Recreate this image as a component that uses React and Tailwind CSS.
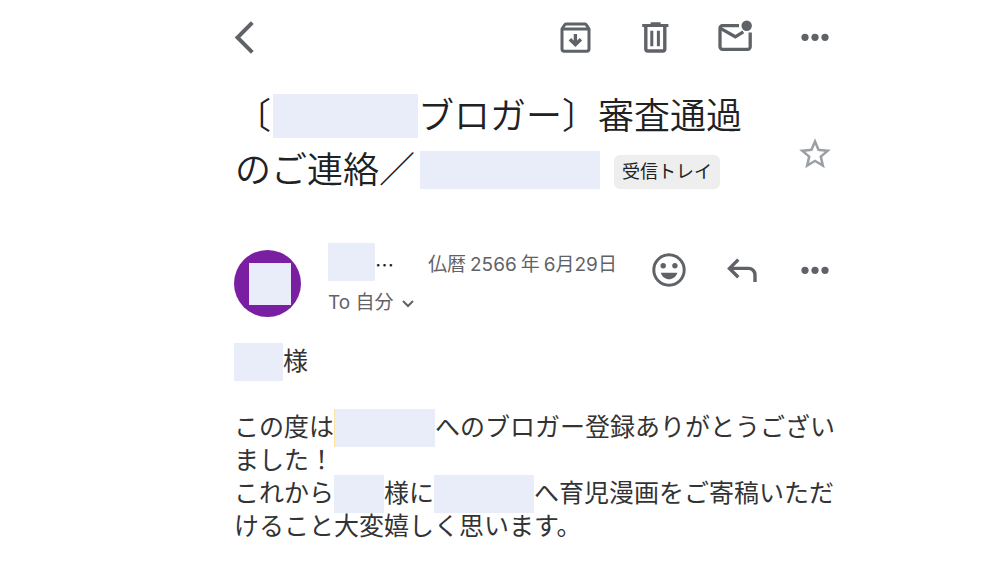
/**
 * App.jsx
 * Mail detail view: toolbar, subject, sender row and message body.
 */

import { MdStarBorder } from 'react-icons/md';

function Icon({ children, strokeWidth = 3, className = 'w-10' }) {
  return (
    <svg
      className={`h-10 shrink-0 ${className}`}
      fill="none"
      stroke="currentColor"
      strokeWidth={strokeWidth}
      aria-hidden="true"
    >
      {children}
    </svg>
  );
}

function BackIcon() {
  return (
    <Icon strokeWidth={4} className="w-5">
      <path d="M18.3 5.7 3.5 20.5l14.8 14.8" />
    </Icon>
  );
}

function ArchiveIcon() {
  return (
    <Icon>
      <path d="M7 12v20a2.2 2.2 0 0 0 2.2 2.2h22.6A2.2 2.2 0 0 0 34 32V12l-2.7-4.2a2 2 0 0 0-1.6-.8H11.3a2 2 0 0 0-1.6.8z" />
      <path d="M7 12h27" />
      <path d="M20.4 17v10M14.9 22.2l5.5 5.5 5.5-5.5" strokeWidth="3.4" />
    </Icon>
  );
}

function TrashIcon() {
  return (
    <Icon>
      <path d="M7.2 8.6h26.2M15.6 6.8h10" />
      <path d="M10.8 9v23a2 2 0 0 0 2 2h15a2 2 0 0 0 2-2V9" strokeWidth="3.4" />
      <path d="M16.8 13.7v15.6M23.4 13.7v15.6" />
    </Icon>
  );
}

function UnreadIcon() {
  return (
    <Icon strokeWidth={3.3}>
      <path d="M24 8.7H7.5A2.5 2.5 0 0 0 5 11.2v18.6a2.5 2.5 0 0 0 2.5 2.5h25.2a2.5 2.5 0 0 0 2.5-2.5V15.6" />
      <path d="m5.5 11.4 14.8 8.4 8-5" />
      <circle cx="31.7" cy="8.7" r="5.2" fill="currentColor" stroke="none" />
    </Icon>
  );
}

function MoreIcon() {
  return (
    <Icon>
      <g fill="currentColor" stroke="none">
        <circle cx="10" cy="20.3" r="3.6" />
        <circle cx="20" cy="20.3" r="3.6" />
        <circle cx="30" cy="20.3" r="3.6" />
      </g>
    </Icon>
  );
}

function SmileIcon() {
  return (
    <Icon>
      <circle cx="20" cy="20" r="15.2" />
      <g fill="currentColor" stroke="none">
        <circle cx="14.2" cy="15.7" r="2.7" />
        <circle cx="25.9" cy="15.7" r="2.7" />
        <path d="M11.7 22.8h16.7c-1.3 4.2-4.7 6.5-8.3 6.5s-7-2.3-8.4-6.5z" />
      </g>
    </Icon>
  );
}

function ReplyIcon() {
  return (
    <Icon strokeWidth={3.4}>
      <path d="M16.3 9.6 7.5 18.4l8.8 8.8M7.5 18.4h19a6.5 6.5 0 0 1 6.5 6.5V32" />
    </Icon>
  );
}

function IconButton({ label, children }) {
  return (
    <button type="button" aria-label={label} className="flex shrink-0 items-center justify-center">
      {children}
    </button>
  );
}

// Blank block standing in for a hidden name
function Mask({ className }) {
  return <span className={`shrink-0 bg-[#e9edfa] ${className}`} />;
}

function Line({ children }) {
  return <span className="flex h-[33px] items-center whitespace-nowrap">{children}</span>;
}

export default function App() {
  return (
    <div className="min-h-screen bg-white font-['Inter','Noto_Sans_CJK_JP',sans-serif] text-[#5f6368]">
      <main lang="ja" className="mr-[165px] ml-auto max-w-[601px]">
        {/* Toolbar */}
        <nav className="flex items-center justify-between pt-[17px]">
          <IconButton label="戻る"><BackIcon /></IconButton>
          <div className="flex gap-10">
            <IconButton label="アーカイブ"><ArchiveIcon /></IconButton>
            <IconButton label="削除"><TrashIcon /></IconButton>
            <IconButton label="未読にする"><UnreadIcon /></IconButton>
            <IconButton label="その他"><MoreIcon /></IconButton>
          </div>
        </nav>

        {/* Subject */}
        <div className="mt-8 flex items-end justify-between">
          <h1 className="text-[36px] leading-[54px] font-[350] whitespace-nowrap text-[#202124]">
            <span className="flex items-center">
              <span className="pl-px">〔</span>
              <Mask className="ml-0.5 h-11 w-[145px]" />
              ブロガー〕審査通過
            </span>
            <span className="flex items-center">
              <span className="pr-[5px] pl-px">のご連絡／</span>
              <span className="flex items-end gap-3.5">
                <Mask className="h-[38px] w-[180px]" />
                <span className="rounded-md bg-[#eeeeee] px-2 text-[18px] leading-[34px] font-normal">
                  受信トレイ
                </span>
              </span>
            </span>
          </h1>
          <button type="button" aria-label="スターを付ける" className="flex w-10 justify-center pb-6 text-[#9aa0a6]">
            <MdStarBorder size={38} />
          </button>
        </div>

        {/* Sender */}
        <header className="mt-[46px] flex items-start text-[19px] leading-7">
          <div className="mt-[7px] flex size-[67px] shrink-0 items-center justify-center rounded-full bg-[#7b1fa2] pl-1">
            <Mask className="size-[42px]" />
          </div>
          <div className="ml-[27px]">
            <div className="flex h-[38px] items-center">
              <Mask className="h-[38px] w-[47px]" />
              <div className="flex pt-[5px]">
                <span className="w-[53px] font-['Noto_Sans_CJK_JP',sans-serif] text-[#202124]">…</span>
                <time className="flex gap-1 whitespace-nowrap">
                  <span>仏暦</span>
                  <span>2566</span>
                  <span>年</span>
                  <span>6月29日</span>
                </time>
              </div>
            </div>
            <button type="button" className="mt-2 flex items-center gap-2">
              To 自分
              <svg className="h-3 w-3" fill="none" stroke="currentColor" strokeWidth="2" aria-hidden="true">
                <path d="m1 4 5 5 5-5" />
              </svg>
            </button>
          </div>
          <div className="mt-[7px] ml-auto flex gap-[33px]">
            <IconButton label="リアクション"><SmileIcon /></IconButton>
            <IconButton label="返信"><ReplyIcon /></IconButton>
            <IconButton label="その他の操作"><MoreIcon /></IconButton>
          </div>
        </header>

        {/* Message */}
        <article className="mt-7 text-[25px] text-[#333333]">
          <p className="mb-[33px]">
            <Line><Mask className="h-[38px] w-[49px]" />様</Line>
          </p>
          <p>
            <Line>
              この度は
              <Mask className="h-[38px] w-[101px] border-l border-[#fde2a0]" />
              へのブロガー登録ありがとうござい
            </Line>
            <Line>ました！</Line>
            <Line>
              これから
              <Mask className="h-[38px] w-[50px]" />
              様に
              <Mask className="h-[38px] w-[100px] border-r border-[#fbeecb]" />
              へ育児漫画をご寄稿いただ
            </Line>
            <Line>けること大変嬉しく思います。</Line>
          </p>
        </article>
      </main>
    </div>
  );
}
